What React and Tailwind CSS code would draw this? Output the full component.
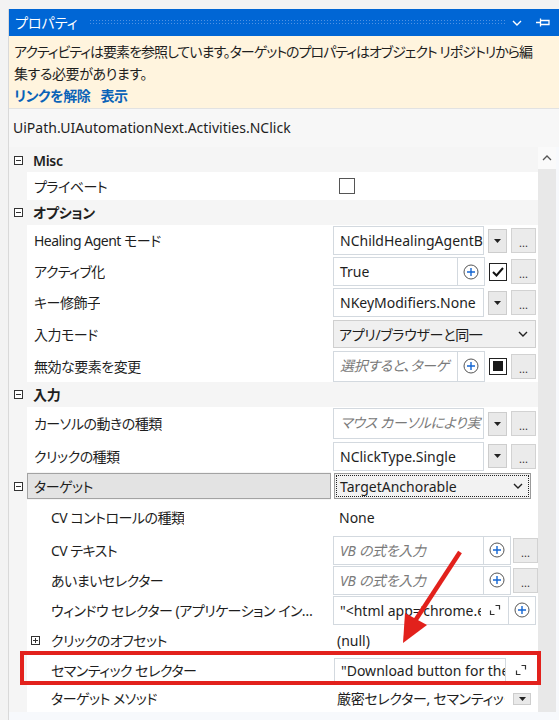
import React from "react";

function BoxIcon({ plus }) {
  return (
    <svg width="9" height="9" viewBox="0 0 9 9" className="shrink-0">
      <rect x="0.5" y="0.5" width="8" height="8" fill="white" stroke="#333" />
      <path d="M2 4.5h5" stroke="#333" />
      {plus && <path d="M4.5 2v5" stroke="#333" />}
    </svg>
  );
}

function PlusIcon() {
  return (
    <svg width="16" height="16" viewBox="0 0 16 16">
      <circle cx="8" cy="8" r="7" fill="white" stroke="#555" strokeWidth="1" />
      <path d="M8 4v8M4 8h8" stroke="#1466d2" strokeWidth="1.4" />
    </svg>
  );
}

function ExpandIcon() {
  return (
    <svg width="12" height="12" viewBox="0 0 12 12">
      <path d="M1.5 6.5v4h4M6.5 1.5h4v4" stroke="#333" strokeWidth="1.2" fill="none" />
    </svg>
  );
}

function DropBtn() {
  return (
    <div className="w-[19px] h-[24px] shrink-0 bg-[#e9e9e9] border border-[#cdcdcd] flex items-center justify-center">
      <svg width="7" height="4" viewBox="0 0 7 4">
        <path d="M0 0h7L3.5 4z" fill="#222" />
      </svg>
    </div>
  );
}

function Dots() {
  return (
    <div className="w-[25px] h-[25px] shrink-0 bg-[#ebebeb] border border-[#d2d2d2] flex items-end justify-center pb-[4px] text-[11px] leading-none text-[#333]">
      ...
    </div>
  );
}

function Chevron() {
  return (
    <svg width="10" height="6" viewBox="0 0 10 6">
      <path d="M1 1l4 4 4-4" stroke="#222" strokeWidth="1.4" fill="none" />
    </svg>
  );
}

function Category({ h, label }) {
  return (
    <div className={`flex items-center bg-[#f5f5f5] pl-[5px] ${h}`}>
      <BoxIcon />
      <span className="ml-[10px] font-semibold text-[#1e1e1e] tracking-[-0.3px]">{label}</span>
    </div>
  );
}

function Row({ h, label, children, nested, labelBox, icon }) {
  return (
    <div className={`flex ${h}`}>
      <div className="w-[18px] shrink-0 bg-[#f5f5f5] flex items-center pl-[5px]">
        {labelBox && <BoxIcon />}
      </div>
      <div
        className={`w-[304px] shrink-0 flex items-center whitespace-nowrap overflow-hidden pr-[8px] ${
          labelBox
            ? "bg-[#e3e3e3] border border-[#a3a3a3] pl-[6px] my-[1px]"
            : nested
            ? "bg-white pl-[24px]"
            : icon
            ? "bg-white pl-[4px]"
            : "bg-white pl-[7px]"
        }`}
      >
        {icon && <span className="mr-[11px] flex"><BoxIcon plus /></span>}
        <span className="block min-w-0 overflow-hidden text-ellipsis tracking-[-0.5px]">{label}</span>
      </div>
      <div className="flex-1 bg-white flex items-center pl-[2px] overflow-hidden">{children}</div>
    </div>
  );
}

function TextBox({ w, children, italic, plus, expand }) {
  return (
    <div className={`${w} h-[29px] shrink-0 border border-[#d3d9df] bg-white flex`}>
      <div
        className={`flex-1 min-w-0 overflow-hidden whitespace-nowrap flex items-center pl-[6px] ${
          italic ? "italic text-[#7a7a7a] tracking-[-0.3px]" : "text-[#1e1e1e]"
        }`}
      >
        {children}
      </div>
      {expand && (
        <div className="w-[27px] shrink-0 flex items-center justify-center">
          <ExpandIcon />
        </div>
      )}
      {plus && (
        <div className="w-[27px] shrink-0 border-l border-[#d3d9df] flex items-center justify-center">
          <PlusIcon />
        </div>
      )}
    </div>
  );
}

function WrapBox({ w, plus, children }) {
  return (
    <div className={`${w} h-[31px] shrink-0 border border-[#d3d9df] bg-white flex`}>
      <div className="flex-1 min-w-0 overflow-hidden italic text-[#7a7a7a] pl-[6px] pt-[3px] leading-[22px] break-all tracking-[-0.3px]">
        {children}
      </div>
      {plus && (
        <div className="w-[27px] shrink-0 border-l border-[#d3d9df] flex items-center justify-center">
          <PlusIcon />
        </div>
      )}
    </div>
  );
}

export default function App() {
  return (
    <div className="relative w-[559px] h-[720px] overflow-hidden bg-[#f3f3f3] pt-[9px] pl-[8px] text-[14px] text-[#1e1e1e] font-['Noto_Sans','Noto_Sans_CJK_JP',sans-serif] [font-feature-settings:'palt']">
      <div className="flex flex-col h-full bg-[#f7f9fc] border-l border-[#d9d9d9]">
        {/* Title bar */}
        <div className="h-[27px] shrink-0 bg-[#0066d5] flex items-center pl-[6px] pr-[9px] text-white">
          <span className="text-[14px] leading-none">プロパティ</span>
          <div className="flex-1 ml-[12px] h-[7px] bg-[radial-gradient(circle,#4f92e3_0.7px,transparent_1px)] bg-[length:3px_3px]" />
          <div className="ml-[7px] w-[10px] flex">
            <svg width="10" height="6" viewBox="0 0 10 6">
              <path d="M1 1l4 4 4-4" stroke="white" strokeWidth="1.4" fill="none" />
            </svg>
          </div>
          <div className="ml-[14px] flex">
            <svg width="14" height="9" viewBox="0 0 14 9">
              <path d="M0 4.5h4M4.5 0.5v8M4.5 2.5h8.5v4h-8.5" stroke="white" strokeWidth="1.3" fill="none" />
            </svg>
          </div>
        </div>

        {/* Info box */}
        <div className="h-[73px] shrink-0 bg-[#fff4de] border-b border-[#e2e2e2] px-[5px] pt-[5px] leading-[22px]">
          <div className="whitespace-nowrap tracking-[-1px]">
            アクティビティは要素を参照しています。ターゲットのプロパティはオブジェクト リポジトリから編
          </div>
          <div className="whitespace-nowrap tracking-[-0.4px]">集する必要があります。</div>
          <div className="flex gap-[10px] font-semibold text-[#0a63b8] tracking-[-0.4px]">
            <span>リンクを解除</span>
            <span>表示</span>
          </div>
        </div>

        {/* Class name */}
        <div className="h-[38px] shrink-0 bg-[#f7f7f7] flex items-center pl-[4px] pb-[2px]">
          UiPath.UIAutomationNext.Activities.NClick
        </div>

        {/* Grid */}
        <div className="flex flex-1 min-h-0">
          <div className="w-[529px] shrink-0 flex flex-col pt-[1px] bg-[#f5f5f5]">
            <Category h="h-[24px]" label="Misc" />
            <Row h="h-[28px]" label="プライベート">
              <div className="ml-[6px] w-[16px] h-[16px] border border-[#555] bg-white" />
            </Row>
            <Category h="h-[25px]" label="オプション" />
            <Row h="h-[31px]" label="Healing Agent モード">
              <div className="flex items-center gap-[4px]">
                <TextBox w="w-[151px]">NChildHealingAgentBehavior</TextBox>
                <DropBtn />
                <Dots />
              </div>
            </Row>
            <Row h="h-[31px]" label="アクティブ化">
              <div className="flex items-center gap-[4px]">
                <TextBox w="w-[152px]" plus>True</TextBox>
                <div className="w-[18px] h-[18px] border border-[#222] bg-white flex items-center justify-center">
                  <svg width="12" height="10" viewBox="0 0 12 10">
                    <path d="M1 5l3.5 3.5L11 1" stroke="#111" strokeWidth="2" fill="none" />
                  </svg>
                </div>
                <Dots />
              </div>
            </Row>
            <Row h="h-[31px]" label="キー修飾子">
              <div className="flex items-center gap-[4px]">
                <TextBox w="w-[151px]">NKeyModifiers.None</TextBox>
                <DropBtn />
                <Dots />
              </div>
            </Row>
            <Row h="h-[32px]" label="入力モード">
              <div className="w-[203px] h-[28px] bg-[#f0f0f0] border border-[#cfcfcf] flex items-center pl-[5px] pr-[7px]">
                <span className="flex-1 whitespace-nowrap tracking-[-0.3px]">アプリ/ブラウザーと同一</span>
                <Chevron />
              </div>
            </Row>
            <Row h="h-[32px]" label="無効な要素を変更">
              <div className="flex items-center gap-[4px]">
                <WrapBox w="w-[152px]" plus>
                  選択すると、ターゲット要素が無効な場合でも実行されます
                </WrapBox>
                <div className="w-[18px] h-[17px] border border-[#222] bg-white flex items-center justify-center">
                  <div className="w-[10px] h-[10px] bg-[#1a1a1a]" />
                </div>
                <Dots />
              </div>
            </Row>
            <Category h="h-[25px]" label="入力" />
            <Row h="h-[33px]" label="カーソルの動きの種類">
              <div className="flex items-center gap-[4px]">
                <WrapBox w="w-[151px]">マウス カーソルにより実行されるアクションの種類</WrapBox>
                <DropBtn />
                <Dots />
              </div>
            </Row>
            <Row h="h-[32px]" label="クリックの種類">
              <div className="flex items-center gap-[4px]">
                <TextBox w="w-[151px]">NClickType.Single</TextBox>
                <DropBtn />
                <Dots />
              </div>
            </Row>
            <Row h="h-[28px]" label="ターゲット" labelBox>
              <div className="ml-[1px] w-[197px] h-[26px] bg-[#f2f2f2] border border-[#9a9a9a] p-[1px]">
                <div className="h-full border border-dotted border-[#222] flex items-center pl-[3px] pr-[5px]">
                  <span className="flex-1 whitespace-nowrap">TargetAnchorable</span>
                  <Chevron />
                </div>
              </div>
            </Row>
            <Row h="h-[35px]" label="CV コントロールの種類" nested>
              <span className="pl-[6px]">None</span>
            </Row>
            <Row h="h-[30px]" label="CV テキスト" nested>
              <div className="flex items-center gap-[2px]">
                <TextBox w="w-[178px]" italic plus>VB の式を入力</TextBox>
                <Dots />
              </div>
            </Row>
            <Row h="h-[30px]" label="あいまいセレクター" nested>
              <div className="flex items-center gap-[2px]">
                <TextBox w="w-[178px]" italic plus>VB の式を入力</TextBox>
                <Dots />
              </div>
            </Row>
            <Row h="h-[30px]" label="ウィンドウ セレクター (アプリケーション インスタンス)" nested>
              <TextBox w="w-[203px]" plus expand>
                "&lt;html app='chrome.exe' title='Download' /&gt;"
              </TextBox>
            </Row>
            <Row h="h-[30px]" label="クリックのオフセット" icon>
              <span className="pl-[4px]">(null)</span>
            </Row>
            <Row h="h-[30px]" label="セマンティック セレクター" nested>
              <div className="flex items-center">
                <div className="ml-[1px] w-[172px] h-[25px] border border-[#d3d9df] bg-white flex items-center pl-[6px] overflow-hidden whitespace-nowrap">
                  "Download button for the latest release"
                </div>
                <div className="ml-[9px] flex">
                  <ExpandIcon />
                </div>
              </div>
            </Row>
            <Row h="h-[27px]" label="ターゲット メソッド" nested>
              <div className="flex items-center">
                <div className="w-[172px] pl-[4px] overflow-hidden whitespace-nowrap tracking-[-0.3px]">
                  厳密セレクター, セマンティック セレクター
                </div>
                <div className="ml-[8px] w-[18px] h-[12px] bg-[#e9e9e9] border border-[#cdcdcd] flex items-center justify-center">
                  <svg width="7" height="4" viewBox="0 0 7 4">
                    <path d="M0 0h7L3.5 4z" fill="#222" />
                  </svg>
                </div>
              </div>
            </Row>
            <div className="flex-1 bg-[#f7f9fc]" />
          </div>

          {/* Scrollbar */}
          <div className="w-[18px] shrink-0 flex flex-col">
            <div className="h-[22px] bg-[#fafafa] flex items-center justify-center">
              <svg width="10" height="6" viewBox="0 0 10 6">
                <path d="M1 5l4-4 4 4" stroke="#555" strokeWidth="1.3" fill="none" />
              </svg>
            </div>
            <div className="h-[543px] bg-[#e8e8e8]" />
            <div className="flex-1 bg-[#f7f9fc]" />
          </div>
          <div className="flex-1 bg-[#f7f9fc]" />
        </div>
      </div>

      {/* Annotations */}
      <div className="absolute left-[20px] top-[651px] w-[521px] h-[34px] border-[4px] border-[#e2211c] pointer-events-none" />
      <svg className="absolute left-0 top-0 pointer-events-none" width="559" height="720" viewBox="0 0 559 720">
        <path d="M460 552L413 624" stroke="#e2211c" strokeWidth="4.5" />
        <polygon points="403,643 405,613 427,625" fill="#e2211c" />
      </svg>
    </div>
  );
}
